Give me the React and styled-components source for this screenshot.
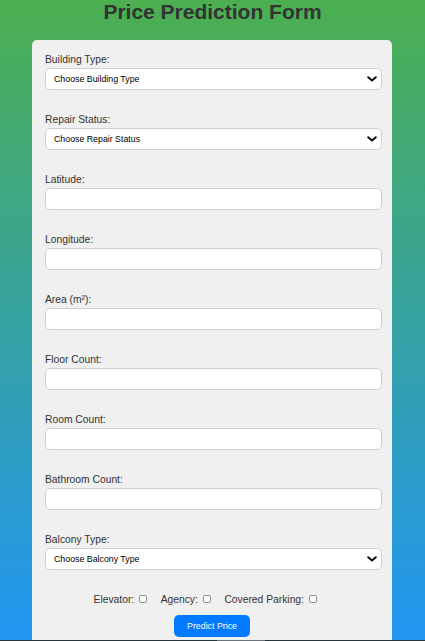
import React from "react";
import styled, { createGlobalStyle } from "styled-components";

const GlobalStyle = createGlobalStyle`
  html, body { margin: 0; padding: 0; }
  body { font-family: "Liberation Sans", Arial, sans-serif; }
`;

const Page = styled.div`
  height: 100vh;
  overflow: hidden;
  background: linear-gradient(to bottom, #4caf50, #2196f3);
  display: flex;
  flex-direction: column;
  align-items: center;
`;

const Title = styled.h1`
  margin: 1px 0 0;
  font-size: 21px;
  line-height: 21px;
  font-weight: bold;
  color: #333;
  text-align: center;
`;

const Card = styled.form`
  margin: 18px 1px 0 0;
  width: 360px;
  box-sizing: border-box;
  background: #f0f0f0;
  border-radius: 5px;
  padding: 14px 13px 20px;
  flex-shrink: 0;
`;

const Group = styled.div`
  margin-bottom: 24px;
`;

const Label = styled.label`
  display: block;
  font-size: 10.3px;
  line-height: 12px;
  color: #333;
  margin-bottom: 2px;
`;

const FieldWrap = styled.div`
  position: relative;
  width: calc(100% + 3px);
`;

const Select = styled.select`
  appearance: none;
  display: block;
  width: 100%;
  height: 22px;
  box-sizing: border-box;
  border: 1px solid #cfcfcf;
  border-radius: 5px;
  background: #fff;
  padding: 0 20px 0 8px;
  font-family: "Liberation Sans", Arial, sans-serif;
  font-size: 8.8px;
  color: #000;
  outline: none;
`;

const Input = styled.input`
  display: block;
  width: 100%;
  height: 22px;
  box-sizing: border-box;
  border: 1px solid #cfcfcf;
  border-radius: 5px;
  background: #fff;
  padding: 0 8px;
  font-family: "Liberation Sans", Arial, sans-serif;
  font-size: 8.8px;
  outline: none;
`;

const Chevron = styled.svg`
  position: absolute;
  right: 5px;
  top: 8px;
  width: 10px;
  height: 6px;
  pointer-events: none;
`;

const CheckRow = styled.div`
  display: flex;
  justify-content: center;
  align-items: center;
  height: 12px;
`;

const CheckItem = styled.label`
  display: flex;
  align-items: center;
  font-size: 10.3px;
  line-height: 12px;
  color: #333;
  margin-right: 13.5px;
`;

const Check = styled.input`
  appearance: none;
  width: 8px;
  height: 8px;
  box-sizing: border-box;
  border: 1px solid #8f8f8f;
  border-radius: 2px;
  background: #fff;
  margin: 0 0 3px 5px;
`;

const ButtonRow = styled.div`
  display: flex;
  justify-content: center;
  margin-top: 9px;
`;

const Button = styled.button`
  height: 22px;
  padding: 0 13.5px;
  border: none;
  border-radius: 5px;
  background: #007bff;
  color: #fff;
  font-family: "Liberation Sans", Arial, sans-serif;
  font-size: 8.8px;
  cursor: pointer;
`;

const EdgeLine = styled.div`
  position: fixed;
  left: 0;
  right: 0;
  bottom: 0;
  height: 1px;
  background: linear-gradient(
    to right,
    #26343c 0,
    #26343c 217px,
    #6b7378 217px,
    #6b7378 265px,
    #26343c 265px
  );
`;

const SelectField = ({ placeholder }) => (
  <FieldWrap>
    <Select defaultValue="">
      <option value="">{placeholder}</option>
    </Select>
    <Chevron viewBox="0 0 10 6">
      <path d="M1.2 1.2 L5 4.6 L8.8 1.2" fill="none" stroke="#111" strokeWidth="2" strokeLinecap="round" strokeLinejoin="round" />
    </Chevron>
  </FieldWrap>
);

const InputField = () => (
  <FieldWrap>
    <Input type="text" />
  </FieldWrap>
);

const fields = [
  { label: "Building Type:", select: "Choose Building Type" },
  { label: "Repair Status:", select: "Choose Repair Status" },
  { label: "Latitude:" },
  { label: "Longitude:" },
  { label: "Area (m²):" },
  { label: "Floor Count:" },
  { label: "Room Count:" },
  { label: "Bathroom Count:" },
  { label: "Balcony Type:", select: "Choose Balcony Type" },
];

export default function App() {
  return (
    <>
      <GlobalStyle />
      <Page>
        <Title>Price Prediction Form</Title>
        <Card onSubmit={(e) => e.preventDefault()}>
          {fields.map((f) => (
            <Group key={f.label}>
              <Label>{f.label}</Label>
              {f.select ? <SelectField placeholder={f.select} /> : <InputField />}
            </Group>
          ))}
          <CheckRow>
            <CheckItem>Elevator:<Check type="checkbox" /></CheckItem>
            <CheckItem>Agency:<Check type="checkbox" /></CheckItem>
            <CheckItem>Covered Parking:<Check type="checkbox" /></CheckItem>
          </CheckRow>
          <ButtonRow>
            <Button type="submit">Predict Price</Button>
          </ButtonRow>
        </Card>
      </Page>
      <EdgeLine />
    </>
  );
}
